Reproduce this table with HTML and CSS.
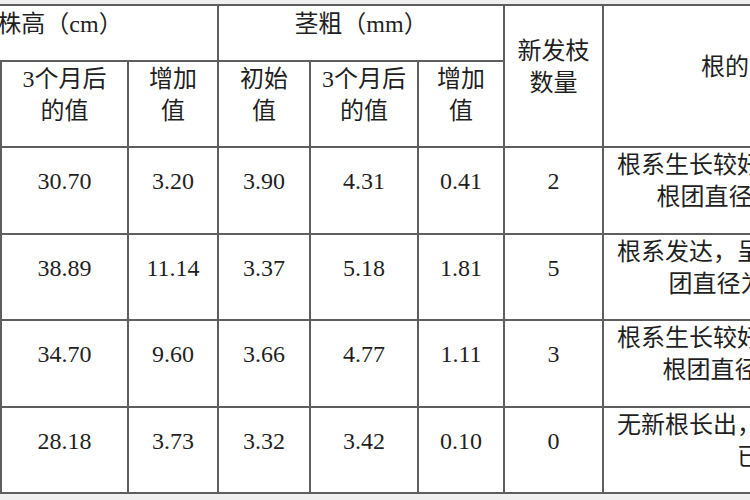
FILE: index.html
```html
<!DOCTYPE html>
<html lang="zh-CN">
<head>
<meta charset="utf-8">
<title>生长情况表</title>
<link rel="stylesheet" href="styles.css">
</head>
<body>
<div class="sheet">
  <table class="data">
    <colgroup>
      <col class="c-init">
      <col class="c-after">
      <col class="c-inc">
      <col class="c-sinit">
      <col class="c-safter">
      <col class="c-sinc">
      <col class="c-branch">
      <col class="c-root">
    </colgroup>
    <thead>
      <tr class="r-top">
        <th colspan="3">株高（cm）</th>
        <th colspan="3">茎粗（mm）</th>
        <th rowspan="2">新发枝<br>数量</th>
        <th rowspan="2" class="root">根的生长状况</th>
      </tr>
      <tr class="r-sub">
        <th>初始值</th>
        <th>3个月后<br>的值</th>
        <th>增加<br>值</th>
        <th>初始<br>值</th>
        <th>3个月后<br>的值</th>
        <th>增加<br>值</th>
      </tr>
    </thead>
    <tbody>
      <tr class="r-data">
        <td>27.50</td><td>30.70</td><td>3.20</td><td>3.90</td><td>4.31</td><td>0.41</td><td>2</td>
        <td class="root">根系生长较好，须根数量多，根团直径为 10～12 cm</td>
      </tr>
      <tr class="r-data">
        <td>27.75</td><td>38.89</td><td>11.14</td><td>3.37</td><td>5.18</td><td>1.81</td><td>5</td>
        <td class="root">根系发达，呈网状密布，其根团直径为 14～16 cm</td>
      </tr>
      <tr class="r-data">
        <td>25.10</td><td>34.70</td><td>9.60</td><td>3.66</td><td>4.77</td><td>1.11</td><td>3</td>
        <td class="root">根系生长较好，须根数较少，根团直径约 8～10 cm</td>
      </tr>
      <tr class="r-data">
        <td>24.45</td><td>28.18</td><td>3.73</td><td>3.32</td><td>3.42</td><td>0.10</td><td>0</td>
        <td class="root">无新根长出，老根部分腐烂，已发黑</td>
      </tr>
    </tbody>
  </table>
</div>
</body>
</html>
```
FILE: styles.css
```css
html, body {
  margin: 0;
  padding: 0;
  background: #efefef;
}

body {
  width: 750px;
  height: 500px;
  overflow: hidden;
}

.sheet {
  padding-top: 4px;
}

.data {
  margin-left: -99px;
  border-collapse: collapse;
  table-layout: fixed;
  width: 1041px;
  background: #ffffff;
  color: #1f1f1f;
  font-family: "Liberation Serif", "Noto Sans CJK SC", serif;
  font-size: 24px;
  line-height: 32px;
}

.c-init { width: 99px; }
.c-after { width: 127px; }
.c-inc { width: 90px; }
.c-sinit { width: 92px; }
.c-safter { width: 108px; }
.c-sinc { width: 86px; }
.c-branch { width: 99px; }
.c-root { width: 340px; }

.data th,
.data td {
  border: 2px solid #5e5e5e;
  padding: 0 2px 18px;
  text-align: center;
  vertical-align: middle;
  font-weight: normal;
}

.data .root {
  padding-left: 13px;
  padding-right: 13px;
}

.r-top { height: 56px; }
.r-sub { height: 86px; }
.r-data { height: 86.5px; }
```
